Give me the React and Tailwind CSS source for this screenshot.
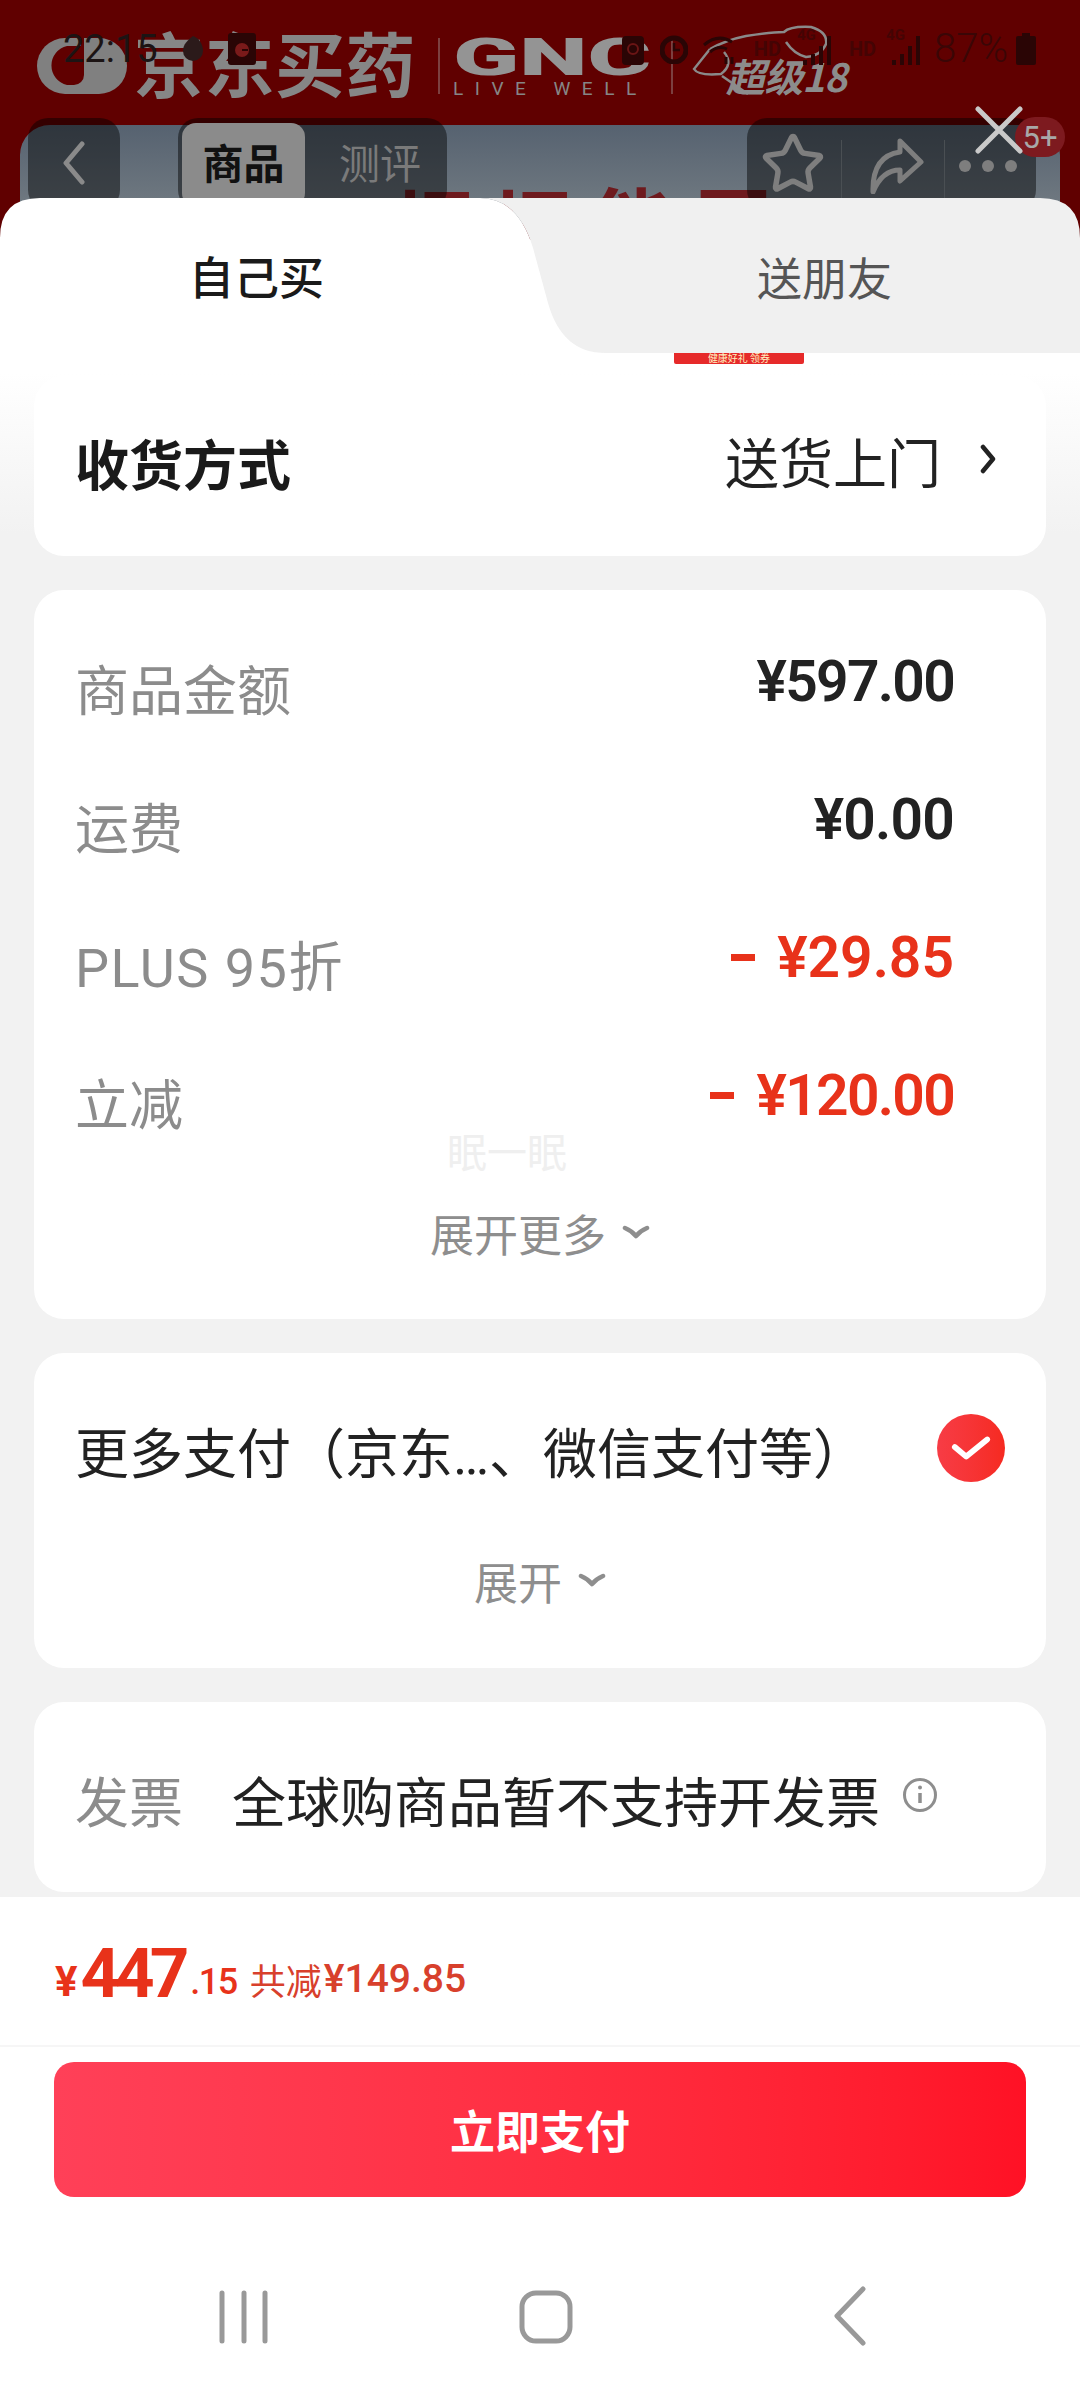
import React from "react";
import { Star } from "lucide-react";

const cjk = { fontFamily: '"Noto Sans CJK SC", sans-serif' };
const num = { fontFamily: 'Roboto, "Noto Sans CJK SC", sans-serif' };

function Chevron({ className }) {
  return (
    <svg viewBox="0 0 28 14" className={className} fill="none" stroke="#8e8e8e" strokeWidth="4.5" strokeLinecap="round" strokeLinejoin="round">
      <path d="M3 3 Q10 6 14 11 Q18 6 25 3" />
    </svg>
  );
}

function Row({ label, labelClass = "", value, valueClass = "tracking-[-1.7px]", red, dash }) {
  return (
    <div className="flex h-[138px] items-center justify-between pl-[41px] pr-[92px]">
      <span className={`translate-y-[3px] text-[54px] leading-none text-[#8c8c8c] ${labelClass}`} style={num}>{label}</span>
      <span className={`flex items-center -translate-y-[9px] text-[57px] leading-none font-semibold ${valueClass} ${red ? "text-[#e8321a]" : "text-[#222222]"}`} style={num}>
        {dash && <span className="mr-[22px] h-[7px] w-[24px] bg-[#e8321a]" />}
        {value}
      </span>
    </div>
  );
}

function Signal() {
  return (
    <svg width="36" height="34" viewBox="0 0 36 34" fill="#2a0505">
      <rect x="2" y="28" width="4" height="5" />
      <rect x="10" y="22" width="4" height="11" />
      <rect x="18" y="14" width="4" height="19" />
      <rect x="26" y="4" width="4" height="29" />
    </svg>
  );
}

function Header() {
  return (
    <div className="relative h-[240px] overflow-hidden bg-[#600000]" style={cjk}>
      {/* banner logos */}
      <div className="flex h-[125px] items-start pl-[37px] pt-[38px] text-[#868686]">
        <svg width="90" height="56" viewBox="0 0 90 56" className="shrink-0">
          <rect width="90" height="56" rx="28" fill="#808080" />
          <path d="M47 0 V37 a10 10 0 0 1 -10 10 H30 a20 20 0 0 1 0 -39 H44 V0 Z" fill="#600000" />
        </svg>
        <span className="ml-[7px] -translate-y-[4px] text-[70px] font-bold leading-[56px] tracking-[0.5px]">京东买药</span>
        <span className="ml-[22px] h-[56px] w-[2px] bg-[#7c4040]" />
        <div className="ml-[13px] flex w-[197px] flex-col" style={num}>
          <span className="origin-left translate-y-[1px] scale-x-[1.87] text-[52px] font-black leading-[38px] text-[#949494]">GNC</span>
          <span className="mt-[3px] whitespace-nowrap text-[19px] leading-[19px] tracking-[11.5px]">LIVE WELL</span>
        </div>
        <span className="ml-[21px] h-[56px] w-[2px] bg-[#7c4040]" />
        <div className="relative ml-[15px] h-[60px] w-[170px]">
          <svg width="150" height="75" viewBox="0 0 150 75" fill="none" stroke="#8a8a8a" strokeWidth="2.5" className="absolute left-[-2px] top-[-14px]">
            <path d="M24 25 Q40 16 60 12 Q85 8 98 8 Q104 2 125 3 Q142 8 140 20 Q135 32 120 33 Q108 30 100 18" />
            <path d="M24 25 L8 45 Q12 52 35 50 Q48 40 38 28" />
            <path d="M36 52 L62 70" />
          </svg>
          <span className="absolute left-[38px] top-[17px] whitespace-nowrap text-[39px] font-bold italic leading-[40px] tracking-[-1px] text-[#8c8c8c]">超级18</span>
        </div>
      </div>

      {/* product picture under the nav */}
      <div className="absolute left-[20px] right-[20px] top-[125px] h-[115px] rounded-t-[30px] bg-gradient-to-b from-[#566270] to-[#7b8388]">
        <div className="absolute left-[378px] top-[56px] whitespace-nowrap text-[78px] font-bold leading-none tracking-[20px] text-[#6e1a1e]">旧旧能厚</div>
      </div>

      {/* status bar */}
      <div className="absolute left-0 right-0 top-[30px] flex h-[38px] items-center justify-between pl-[63px] pr-[44px] text-[#2a0505]">
        <div className="flex items-center gap-[24px]">
          <span className="text-[38px] leading-none text-[#1c1414]" style={num}>22:15</span>
          <svg width="22" height="28" viewBox="0 0 22 28" fill="#2b1a1a"><path d="M11 1c6 2 10 8 10 15a10 10 0 0 1-20 0C1 9 6 5 11 1z" /></svg>
          <svg width="28" height="32" viewBox="0 0 28 32"><rect width="28" height="32" rx="3" fill="#2a0505" /><circle cx="14" cy="17" r="7" fill="#7a1a1a" /><path d="M14 17h6" stroke="#2a0505" strokeWidth="2" /></svg>
        </div>
        <div className="flex items-center">
          <svg width="22" height="32" viewBox="0 0 22 32"><rect y="3" width="22" height="29" rx="4" fill="#2a0505" /><circle cx="11" cy="16" r="5" fill="none" stroke="#6a1515" strokeWidth="2" /></svg>
          <svg width="28" height="30" viewBox="0 0 28 30" className="ml-[16px]"><circle cx="14" cy="16" r="12" fill="none" stroke="#2a0505" strokeWidth="5" /><path d="M14 9v7h6" stroke="#2a0505" strokeWidth="2.5" fill="none" /></svg>
          <svg width="40" height="32" viewBox="0 0 40 32" fill="none" stroke="#2a0505" strokeWidth="3" className="ml-[14px]"><path d="M2 12Q16 0 30 9" /><path d="M8 19Q16 12 25 16" /><path d="M24 24v7M30 24v7" /></svg>
          <span className="ml-[12px] text-[20px] font-bold leading-none text-[#440404]" style={num}>HD</span>
          <span className="relative ml-[20px] flex h-[34px] w-[36px]">
            <span className="absolute left-[-4px] top-[-4px] text-[15px] font-bold leading-none text-[#440404]" style={num}>4G</span>
            <Signal />
          </span>
          <span className="ml-[12px] text-[20px] font-bold leading-none text-[#440404]" style={num}>HD</span>
          <span className="relative ml-[14px] flex h-[34px] w-[36px]">
            <span className="absolute left-[-4px] top-[-4px] text-[15px] font-bold leading-none text-[#440404]" style={num}>4G</span>
            <Signal />
          </span>
          <span className="ml-[8px] text-[40px] font-light leading-none text-[#3a0606]" style={num}>87%</span>
          <svg width="20" height="32" viewBox="0 0 20 32" fill="#2a0505" className="ml-[8px]"><rect x="6" width="8" height="4" /><rect y="3" width="20" height="29" rx="2" /></svg>
        </div>
      </div>

      {/* nav */}
      <div className="absolute left-[28px] top-[118px] flex h-[92px] w-[92px] items-center justify-center rounded-[20px] bg-black/45">
        <svg width="24" height="44" viewBox="0 0 24 44" fill="none" stroke="#8a8a8a" strokeWidth="5" strokeLinecap="round" strokeLinejoin="round" className="mt-[-2px]"><path d="M20 3 L4 22 L20 41" /></svg>
      </div>
      <div className="absolute left-[178px] top-[118px] flex h-[92px] w-[269px] items-start rounded-[20px] bg-black/45 pl-[4px] pt-[5px]">
        <span className="flex h-[84px] w-[123px] items-center justify-center rounded-[14px] bg-[#8b8b8b] pb-[6px] text-[41px] font-bold text-[#111111]">商品</span>
        <span className="ml-[34px] mt-[14px] text-[41px] leading-[48px] text-[#7a7a7a]">测评</span>
      </div>
      <div className="absolute left-[747px] top-[118px] flex h-[92px] w-[289px] items-start rounded-[20px] bg-black/45">
        <Star size={66} strokeWidth={2} color="#7e7e7e" className="ml-[13px] mt-[13px]" strokeLinejoin="round" />
        <span className="ml-[15px] mt-[22px] h-[58px] w-[1px] bg-[#4a4f53]" />
        <svg width="56" height="56" viewBox="0 0 56 56" fill="none" stroke="#7e7e7e" strokeWidth="5" strokeLinejoin="round" className="ml-[26px] mt-[20px]">
          <path d="M32 3 L53 24 L32 43 V32 Q14 32 5 54 Q4 18 32 14 Z" />
        </svg>
        <span className="ml-[20px] mt-[22px] h-[58px] w-[1px] bg-[#4a4f53]" />
        <span className="ml-[14px] mt-[42px] flex gap-[11px]">
          <span className="h-[12px] w-[12px] rounded-full bg-[#7e7e7e]" />
          <span className="h-[12px] w-[12px] rounded-full bg-[#7e7e7e]" />
          <span className="h-[12px] w-[12px] rounded-full bg-[#7e7e7e]" />
        </span>
      </div>
      <span className="absolute left-[1015px] top-[117px] flex h-[40px] w-[50px] items-center justify-center rounded-[20px] bg-[#7d1a1f] text-[31px] leading-none text-[#a8a8a8]" style={num}>5+</span>
      <svg width="50" height="50" viewBox="0 0 50 50" className="absolute left-[974px] top-[105px]" stroke="#c9c9c9" strokeWidth="5" strokeLinecap="round">
        <path d="M4 4 L46 46 M46 4 L4 46" />
      </svg>
    </div>
  );
}

export default function App() {
  return (
    <div className="flex h-[2400px] w-[1080px] flex-col overflow-hidden bg-[#f2f2f2]" style={cjk}>
      <Header />
      {/* sheet */}
      <div className="relative -mt-[42px] flex min-h-0 flex-1 flex-col">
        <div className="relative h-[155px] shrink-0">
          <svg width="1080" height="155" viewBox="0 0 1080 155" className="absolute inset-0">
            <path d="M480 0 H1040 Q1080 0 1080 40 V155 H605 Q562 155 548 105 L533 50 Q518 0 480 0 Z" fill="#f0f0f0" />
            <path d="M0 40 Q0 0 40 0 H480 Q518 0 533 50 L548 105 Q562 155 605 155 H0 Z" fill="#ffffff" />
          </svg>
          <span className="absolute left-[189px] top-[52px] text-[45px] font-medium leading-[52px] text-[#1a1a1a]">自己买</span>
          <span className="absolute left-[757px] top-[53px] text-[45px] leading-[52px] text-[#555555]">送朋友</span>
        </div>

        <div className="relative flex min-h-0 flex-1 flex-col gap-[34px] overflow-hidden bg-[linear-gradient(#ffffff_0px,#ffffff_20px,#f2f2f2_180px)] px-[34px] pt-[23px]">
          <div className="absolute left-[674px] top-0 flex h-[11px] w-[130px] items-start justify-center overflow-hidden rounded-b-[2px] bg-[#e62a2a] text-[10px] leading-[10px] text-[#fff2c0]">健康好礼 领券</div>

          <div className="flex h-[180px] shrink-0 items-center justify-between rounded-[30px] bg-white pl-[41px] pr-[50px]">
            <span className="-translate-y-[3px] text-[54px] font-bold leading-none text-[#1a1a1a]">收货方式</span>
            <span className="flex items-center text-[54px] leading-none text-[#222222]">
              <span className="-translate-y-[5px]">送货上门</span>
              <svg width="16" height="32" viewBox="0 0 16 32" fill="none" stroke="#222222" strokeWidth="4.5" strokeLinecap="round" strokeLinejoin="round" className="ml-[39px] -translate-y-[7px]"><path d="M3 4 L13 16 L3 28" /></svg>
            </span>
          </div>

          <div className="flex h-[729px] shrink-0 flex-col rounded-[30px] bg-white pt-[31px]">
            <Row label="商品金额" value="¥597.00" />
            <Row label="运费" value="¥0.00" valueClass="tracking-[-0.8px]" />
            <Row label="PLUS 95折" labelClass="tracking-[1.5px]" value="¥29.85" valueClass="tracking-normal" red dash />
            <Row label="立减" value="¥120.00" red dash />
            <div className="relative flex flex-1 items-start justify-center pt-[35px]">
              <span className="absolute left-[413px] top-[-46px] text-[40px] leading-[46px] text-[#efefef]">眠一眠</span>
              <span className="text-[44px] leading-[50px] text-[#8e8e8e]">展开更多</span>
              <Chevron className="ml-[16px] mt-[17px] h-[14px] w-[28px]" />
            </div>
          </div>

          <div className="flex h-[315px] shrink-0 flex-col rounded-[30px] bg-white">
            <div className="flex h-[194px] items-center justify-between pl-[41px] pr-[41px]">
              <span className="translate-y-[6px] whitespace-nowrap text-[54px] leading-none text-[#222222]" style={num}>更多支付（京东…、微信支付等）</span>
              <span className="flex h-[68px] w-[68px] -translate-y-[2px] items-center justify-center rounded-full bg-gradient-to-r from-[#f73c45] to-[#f62a20]">
                <svg width="40" height="28" viewBox="0 0 42 28" fill="none" stroke="#ffffff" strokeWidth="6" strokeLinecap="round" strokeLinejoin="round"><path d="M4 13 L16 23 L38 5" /></svg>
              </span>
            </div>
            <div className="flex items-start justify-center pt-[9px]">
              <span className="text-[44px] leading-[50px] text-[#8e8e8e]">展开</span>
              <Chevron className="ml-[16px] mt-[17px] h-[14px] w-[28px]" />
            </div>
          </div>

          <div className="flex h-[190px] shrink-0 items-center rounded-[30px] bg-white pl-[41px]">
            <span className="translate-y-[3px] text-[54px] leading-none text-[#8c8c8c]">发票</span>
            <span className="ml-[49px] translate-y-[3px] text-[54px] leading-none text-[#222222]">全球购商品暂不支持开发票</span>
            <svg width="36" height="36" viewBox="0 0 36 36" fill="none" stroke="#8e8e8e" strokeWidth="3" className="ml-[22px] -translate-y-[2px]">
              <circle cx="18" cy="18" r="15.5" />
              <path d="M18 16v10" strokeWidth="3.5" />
              <circle cx="18" cy="10.5" r="2" fill="#8e8e8e" stroke="none" />
            </svg>
          </div>
        </div>

        {/* bottom bar */}
        <div className="flex h-[503px] shrink-0 flex-col bg-white">
          <div className="flex h-[150px] items-center border-b-2 border-[#f6f6f6] pl-[55px] text-[#e8321a]" style={num}>
            <span className="mt-[22px] text-[42px] font-bold leading-none">¥</span>
            <span className="ml-[3px] mt-[4px] text-[69px] font-bold leading-none tracking-[-5px]">447</span>
            <span className="ml-[6px] mt-[22px] text-[36px] font-medium leading-none tracking-[-1.5px]">.15</span>
            <span className="ml-[13px] mt-[16px] text-[36px] leading-none text-[#d8402c]" style={cjk}>共减</span>
            <span className="ml-[2px] mt-[16px] text-[39px] font-medium leading-none text-[#d8402c]">¥149.85</span>
          </div>
          <div className="mx-[54px] mt-[15px] flex h-[135px] items-center justify-center rounded-[20px] bg-gradient-to-r from-[#ff4058] to-[#ff1125] text-[45px] font-bold text-white">立即支付</div>
          <div className="relative flex-1">
            <svg width="1080" height="204" viewBox="0 0 1080 204" className="absolute inset-0" fill="none" stroke="#999999" strokeWidth="5" strokeLinecap="round" strokeLinejoin="round">
              <path d="M222 96 V144 M244 96 V144 M265 96 V144" />
              <rect x="522" y="96" width="48" height="48" rx="14" />
              <path d="M863 92 L837 119 L863 146" />
            </svg>
          </div>
        </div>
      </div>
    </div>
  );
}
